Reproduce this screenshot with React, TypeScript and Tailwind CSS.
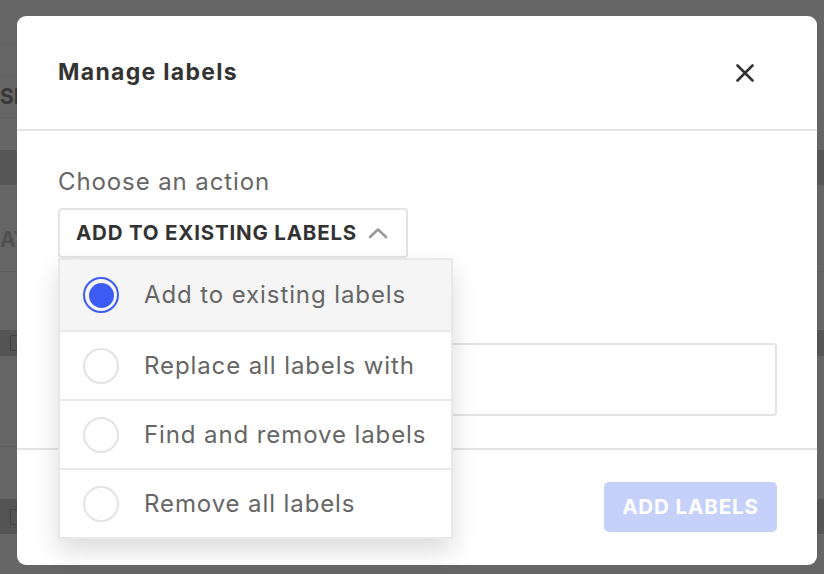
import React, { useState } from 'react';

const ACTIONS = [
  'Add to existing labels',
  'Replace all labels with',
  'Find and remove labels',
  'Remove all labels',
];

const Radio = ({ checked }: { checked: boolean }) =>
  checked ? (
    <span className="w-[36px] h-[36px] rounded-full border-2 border-[#3d5cf5] flex items-center justify-center shrink-0">
      <span className="w-[25px] h-[25px] rounded-full bg-[#3d5cf5]" />
    </span>
  ) : (
    <span className="w-[36px] h-[36px] rounded-full border-2 border-[#e3e3e3] bg-white shrink-0" />
  );

// dimmed page behind the dialog
const Background = () => (
  <div className="absolute inset-0 bg-white flex flex-col text-[#555]">
    <div className="h-[44px] border-b border-[#eee]" />
    <div className="h-[32px] border-b border-[#eee]" />
    <div className="h-[42px] border-b border-[#eee] flex items-center font-bold text-[21px]">
      <span className="text-[#8c8c8c]">SE</span>
    </div>
    <div className="h-[32px]" />
    <div className="h-[35px] bg-[#d6d6d6]" />
    <div className="h-[87px] border-b border-[#eee] flex items-end pb-[16px] text-[21px] font-bold">
      <span className="text-[#c8c8c8]">AT</span>
    </div>
    <div className="h-[58px]" />
    <div className="h-[26px] bg-[#d2d2d2] flex items-center justify-between pl-[10px]">
      <span className="w-[14px] h-[16px] border border-[#aaa]" />
    </div>
    <div className="h-[91px] border-b border-[#eee]" />
    <div className="h-[52px]" />
    <div className="h-[35px] bg-[#d2d2d2] flex items-center pl-[10px]">
      <span className="w-[14px] h-[16px] border border-[#aaa]" />
    </div>
  </div>
);

export default function App() {
  const [selected, setSelected] = useState(0);
  const [open, setOpen] = useState(true);

  return (
    <div
      className="relative w-[824px] h-[574px] overflow-hidden"
      style={{ fontFamily: 'Inter, "Noto Sans", sans-serif' }}
    >
      <Background />
      <div className="absolute inset-0 bg-black/60 flex items-start pt-[16px] pl-[17px]">
        <div className="w-[800px] h-[549px] bg-white rounded-[9px] flex flex-col">
          {/* header */}
          <div className="h-[115px] shrink-0 flex items-center justify-between pl-[41px] pr-[63px] border-b-2 border-[#e4e4e4]">
            <h2 className="text-[23px] font-bold text-[#333] tracking-[1.3px]">Manage labels</h2>
            <button className="mt-[1px]">
              <svg width="18" height="18" viewBox="0 0 18 18" fill="none" stroke="#333" strokeWidth="2.6" strokeLinecap="round">
                <path d="M1.5 1.5 L16.5 16.5 M16.5 1.5 L1.5 16.5" />
              </svg>
            </button>
          </div>

          {/* body */}
          <div className="flex-1 pl-[41px] pr-[40px] pt-[35px]">
            <p className="text-[24px] text-[#666] leading-[32px] tracking-[0.9px]">Choose an action</p>
            <div className="relative mt-[10px] w-fit">
              <button
                onClick={() => setOpen(!open)}
                className="h-[50px] pl-[16px] pr-[18px] flex items-center gap-[11px] border-2 border-[#e4e4e4] rounded-[4px] bg-white"
              >
                <span className="text-[20.5px] font-bold text-[#333] uppercase tracking-[0.8px]">Add to existing labels</span>
                <svg width="20" height="12" viewBox="0 0 20 12" fill="none" stroke="#9a9a9a" strokeWidth="2.6" strokeLinecap="round" strokeLinejoin="round">
                  <path d="M2 10 L10 2.5 L18 10" />
                </svg>
              </button>

              {open && (
                <div className="absolute left-0 top-[50px] w-[395px] bg-white border-2 border-[#e8e8e8] shadow-[0_12px_24px_rgba(0,0,0,0.14)] z-10">
                  {ACTIONS.map((a, i) => (
                    <div
                      key={a}
                      onClick={() => setSelected(i)}
                      className={`flex items-center gap-[25px] pl-[23px] ${i > 0 ? 'h-[69px] border-t-2 border-[#e8e8e8]' : 'h-[70px]'} ${selected === i ? 'bg-[#f5f5f5]' : 'bg-white'}`}
                    >
                      <Radio checked={selected === i} />
                      <span className="text-[24px] text-[#666] tracking-[0.9px]">{a}</span>
                    </div>
                  ))}
                </div>
              )}
            </div>

            <p className="mt-[22px] text-[24px] text-[#666] leading-[32px] tracking-[0.9px]">Labels</p>
            <div className="mt-[31px] h-[73px] border-2 border-[#e4e4e4] rounded-[4px]" />
          </div>

          {/* footer */}
          <div className="h-[117px] shrink-0 border-t-2 border-[#e4e4e4] flex items-center justify-end pr-[40px] pb-[1px]">
            <button disabled className="w-[173px] h-[50px] rounded-[5px] bg-[#c5d1fa] text-white text-[20.5px] font-bold uppercase tracking-[0.9px]">
              Add labels
            </button>
          </div>
        </div>
      </div>
    </div>
  );
}
